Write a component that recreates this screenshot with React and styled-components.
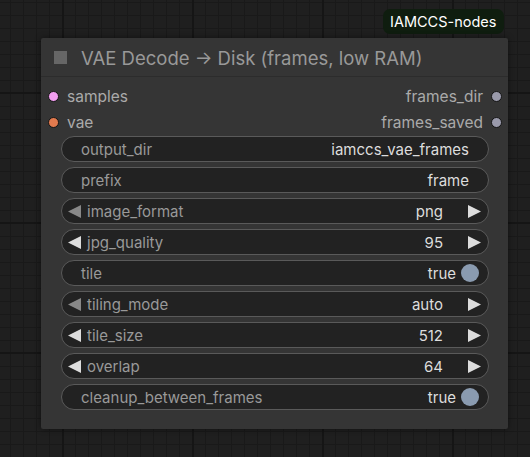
import styled, { createGlobalStyle } from "styled-components";

const slots = {
  inputs: [
    { name: "samples", color: "#f29ef0" },
    { name: "vae", color: "#e27a4e" },
  ],
  outputs: ["frames_dir", "frames_saved"],
};

const widgets = [
  { kind: "text", label: "output_dir", value: "iamccs_vae_frames" },
  { kind: "text", label: "prefix", value: "frame" },
  { kind: "combo", label: "image_format", value: "png" },
  { kind: "number", label: "jpg_quality", value: "95" },
  { kind: "toggle", label: "tile", value: "true" },
  { kind: "combo", label: "tiling_mode", value: "auto" },
  { kind: "number", label: "tile_size", value: "512" },
  { kind: "number", label: "overlap", value: "64" },
  { kind: "toggle", label: "cleanup_between_frames", value: "true" },
];

function Arrow({ dir, dim }) {
  return (
    <ArrowIcon viewBox="0 0 13 13" $dim={dim}>
      {dir === "left" ? (
        <polygon points="13,0 13,13 0,6.5" />
      ) : (
        <polygon points="0,0 0,13 13,6.5" />
      )}
    </ArrowIcon>
  );
}

function Widget({ w }) {
  const hasArrows = w.kind === "combo" || w.kind === "number";
  return (
    <WidgetRow $arrows={hasArrows} $toggle={w.kind === "toggle"}>
      {hasArrows && <Arrow dir="left" dim={w.kind === "combo"} />}
      <WidgetLabel>{w.label}</WidgetLabel>
      <WidgetValue $arrows={hasArrows}>{w.value}</WidgetValue>
      {hasArrows && <Arrow dir="right" />}
      {w.kind === "toggle" && <ToggleKnob />}
    </WidgetRow>
  );
}

export default function App() {
  return (
    <>
      <GlobalStyle />
      <Canvas>
        <Badge>IAMCCS-nodes</Badge>
        <Node>
          <TitleBar>
            <CollapseBox />
            <Title>VAE Decode → Disk (frames, low RAM)</Title>
          </TitleBar>
          <Body>
            <SlotRows>
              {slots.inputs.map((input, i) => (
                <SlotRow key={input.name}>
                  <SlotSide>
                    <SlotDot $color={input.color} />
                    <SlotLabel>{input.name}</SlotLabel>
                  </SlotSide>
                  <SlotSide>
                    <SlotLabel>{slots.outputs[i]}</SlotLabel>
                    <SlotDot $color="#9a9aab" />
                  </SlotSide>
                </SlotRow>
              ))}
            </SlotRows>
            <Widgets>
              {widgets.map((w) => (
                <Widget key={w.label} w={w} />
              ))}
            </Widgets>
          </Body>
        </Node>
      </Canvas>
    </>
  );
}

const GlobalStyle = createGlobalStyle`
  html, body {
    margin: 0;
    height: 457px;
    overflow: hidden;
    background-color: #1f1f1f;
    background-image:
      linear-gradient(90deg, #151515 2px, transparent 2px),
      linear-gradient(0deg, #151515 2px, transparent 2px),
      linear-gradient(90deg, #191919 1px, transparent 1px),
      linear-gradient(0deg, #191919 1px, transparent 1px);
    background-size: 130px 130px, 130px 130px, 13px 13px, 13px 13px;
    background-position: 62px 0, 0 94px, 10px 0, 0 3px;
    font-family: Inter, "Noto Sans", sans-serif;
  }
`;

const Canvas = styled.div`
  display: flex;
  flex-direction: column;
  align-items: flex-start;
  gap: 4px;
  padding: 9px 0 0 41px;
`;

const Badge = styled.div`
  margin-left: 342px;
  height: 25px;
  padding: 0 8px 0 7px;
  display: flex;
  align-items: center;
  background: #0f1d0f;
  color: #ffffff;
  font-size: 14.5px;
  border-radius: 7px;
`;

const Node = styled.div`
  width: 467px;
  background: #353535;
  border-radius: 2px;
  box-shadow: 0 0 6px rgba(0, 0, 0, 0.45);
`;

const TitleBar = styled.div`
  height: 38px;
  display: flex;
  align-items: center;
  gap: 14px;
  padding-left: 13px;
  border-bottom: 1px solid #2c2c2c;
`;

const CollapseBox = styled.div`
  width: 13px;
  height: 13px;
  background: #666666;
`;

const Title = styled.div`
  color: #999999;
  font-size: 18.5px;
  white-space: nowrap;
  padding-top: 2px;
`;

const Body = styled.div`
  padding: 9px 0 19px;
  display: flex;
  flex-direction: column;
  gap: 4px;
`;

const SlotRows = styled.div`
  display: flex;
  flex-direction: column;
  gap: 6px;
  padding: 0 6px 0 7px;
`;

const SlotRow = styled.div`
  height: 20px;
  display: flex;
  align-items: center;
  justify-content: space-between;
`;

const SlotSide = styled.div`
  display: flex;
  align-items: center;
  gap: 8px;
`;

const SlotDot = styled.span`
  width: 9px;
  height: 9px;
  border-radius: 50%;
  background: ${(p) => p.$color};
  border: 1px solid #151515;
`;

const SlotLabel = styled.span`
  color: #aaaaaa;
  font-size: 15.5px;
`;

const Widgets = styled.div`
  display: flex;
  flex-direction: column;
  gap: 5px;
  padding: 0 19px 0 20px;
`;

const WidgetRow = styled.div`
  height: 26px;
  box-sizing: border-box;
  display: flex;
  align-items: center;
  background: #222222;
  border: 1px solid #5a5a5a;
  border-radius: 13px;
  padding: ${(p) =>
    p.$arrows ? "0 7px 0 6px" : p.$toggle ? "0 9px 0 19px" : "0 19px"};
  gap: 6px;
  font-size: 15px;
`;

const WidgetLabel = styled.span`
  color: #999999;
  flex: 1;
  white-space: nowrap;
`;

const WidgetValue = styled.span`
  color: #dddddd;
  white-space: nowrap;
  margin-right: ${(p) => (p.$arrows ? "19px" : "0")};
`;

const ArrowIcon = styled.svg`
  width: 13px;
  height: 13px;
  flex: none;
  fill: ${(p) => (p.$dim ? "#888888" : "#dddddd")};
`;

const ToggleKnob = styled.span`
  width: 18px;
  height: 18px;
  border-radius: 50%;
  background: #8a9bb0;
  flex: none;
  margin-left: -1px;
`;
